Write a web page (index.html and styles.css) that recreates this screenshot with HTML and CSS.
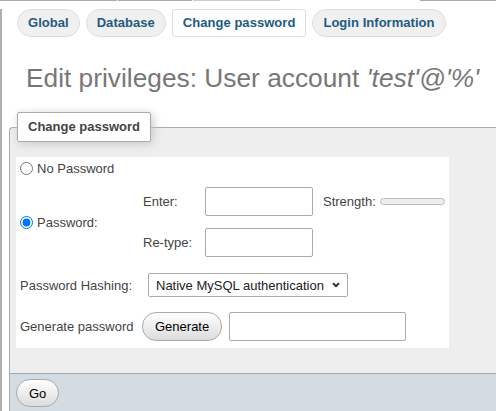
FILE: index.html
```html
<!DOCTYPE html>
<html>
<head>
<meta charset="utf-8">
<link rel="stylesheet" href="styles.css">
</head>
<body>
<div class="topline"><span class="seg s1"></span><span class="seg g1"></span><span class="seg s2"></span><span class="seg g1"></span><span class="seg s3"></span><span class="seg g3"></span><span class="seg s4"></span></div>
<div class="page">
  <nav class="tabs">
    <a class="tab">Global</a>
    <a class="tab">Database</a>
    <a class="tab active">Change password</a>
    <a class="tab">Login Information</a>
  </nav>
  <h2 class="title">Edit privileges: User account <i>'test'@'%'</i></h2>
  <fieldset class="fs">
    <legend class="lg">Change password</legend>
    <div class="inner">
      <div class="row r1">
        <label class="radio"><input type="radio" name="pw" class="rd"><span>No Password</span></label>
      </div>
      <div class="row r2">
        <label class="radio pwlabel"><input type="radio" name="pw" class="rd" checked><span>Password:</span></label>
        <div class="pwgrid">
          <span class="lbl">Enter:</span>
          <input type="text" class="txt">
          <span class="strength">Strength:</span>
          <span class="meter"></span>
          <span class="lbl">Re-type:</span>
          <input type="text" class="txt">
        </div>
      </div>
      <div class="row r3">
        <span class="lab hash">Password Hashing:</span>
        <div class="selwrap">
          <select class="sel"><option>Native MySQL authentication</option></select>
          <svg class="chev" width="8" height="6" viewBox="0 0 8 6"><path d="M1 1.2 L4 4.2 L7 1.2" fill="none" stroke="#222" stroke-width="1.8"/></svg>
        </div>
      </div>
      <div class="row r4">
        <span class="lab gen">Generate password</span>
        <button class="btn">Generate</button>
        <input type="text" class="txt gentxt">
      </div>
    </div>
  </fieldset>
  <div class="footer"><button class="btn go">Go</button></div>
</div>
</body>
</html>
```
FILE: styles.css
```css
html, body {
  margin: 0;
  background: #fff;
}
body {
  font-family: "Liberation Sans", Arial, sans-serif;
  font-size: 13px;
  color: #444;
  overflow: hidden;
}
.topline {
  display: flex;
  height: 1px;
}
.seg { height: 1px; display: block; }
.s1 { width: 117px; background: #aaa; }
.g1 { width: 1px; }
.s2 { width: 74px; background: #aaa; }
.s3 { width: 87px; background: #ccc; }
.g3 { width: 140px; }
.s4 { flex: 1; background: #aaa; }

.page {
  border-left: 2px solid #b0b0b0;
  padding-left: 7px;
}
.tabs {
  display: flex;
  gap: 6px;
  margin: 8px 0 0 8px;
}
.tab {
  display: block;
  padding: 6px 10px;
  line-height: 14px;
  border: 1px solid #ddd;
  border-radius: 14px;
  background: #f0f0f0;
  color: #235a81;
  font-weight: bold;
  letter-spacing: 0.04px;
}
.tab.active {
  background: #fff;
  border-radius: 3px;
}
.title {
  margin: 25px 0 0 17px;
  font-size: 26.3px;
  line-height: 32px;
  font-weight: normal;
  color: #777;
}
.fs {
  margin: 18px 0 0 0;
  padding: 15px 6px 25px;
  border: 1px solid #aaa;
  border-right: none;
  border-radius: 4px 0 0 0;
  background: #eee;
  min-width: 0;
}
.lg {
  margin-left: 1px;
  padding: 7px 10px;
  line-height: 14px;
  background: #fff;
  border: 1px solid #aaa;
  border-radius: 2px;
  box-shadow: 2px 2px 10px #c8c8c8;
  font-weight: bold;
  color: #444;
}
.inner {
  background: #fff;
  width: 433px;
}
.row {
  display: flex;
  align-items: center;
  padding-left: 4px;
}
.r1 { height: 22px; }
.r2 { padding-top: 8px; padding-bottom: 8px; }
.r3 { height: 40px; }
.r4 { height: 43px; }
.radio {
  display: flex;
  align-items: center;
}
.rd {
  width: 13px;
  height: 13px;
  margin: 0 4px 0 0;
}
.pwlabel {
  width: 123px;
  align-self: center;
}
.pwgrid {
  display: grid;
  grid-template-columns: 62px 108px max-content 65px;
  row-gap: 12px;
  align-items: center;
}
.txt {
  box-sizing: border-box;
  width: 108px;
  height: 29px;
  margin: 0;
  border: 1px solid #aaa;
  border-radius: 2px;
  padding: 0 4px;
  font-family: "Liberation Sans", Arial, sans-serif;
  font-size: 13px;
  background: #fff;
}
.strength {
  margin-left: 10px;
  margin-right: 4px;
}
.meter {
  display: block;
  box-sizing: border-box;
  width: 65px;
  height: 7px;
  border: 1px solid #bbb;
  border-radius: 4px;
  background: #eee;
}
.lab { display: block; }
.hash { width: 128px; }
.gen { width: 122px; }
.selwrap {
  position: relative;
  display: flex;
}
.sel {
  appearance: none;
  -webkit-appearance: none;
  box-sizing: border-box;
  width: 200px;
  height: 24px;
  margin: 0;
  padding: 0 20px 0 7px;
  border: 1px solid #aaa;
  border-radius: 2px;
  background: #fff;
  color: #222;
  font-family: "Liberation Sans", Arial, sans-serif;
  font-size: 13px;
}
.chev {
  position: absolute;
  right: 8px;
  top: 9px;
}
.btn {
  box-sizing: border-box;
  height: 29px;
  margin: 0;
  padding: 0 12px;
  border: 1px solid #aaa;
  border-radius: 14px;
  background: linear-gradient(#ffffff, #dcdcdc);
  color: #000;
  font-family: "Liberation Sans", Arial, sans-serif;
  font-size: 13px;
}
.gentxt {
  width: 177px;
  margin-left: 7px;
}
.footer {
  border-left: 1px solid #aaa;
  background: #d3dce3;
  padding: 5px 6px 4px;
}
.go { height: 28px; display: block; }
```
